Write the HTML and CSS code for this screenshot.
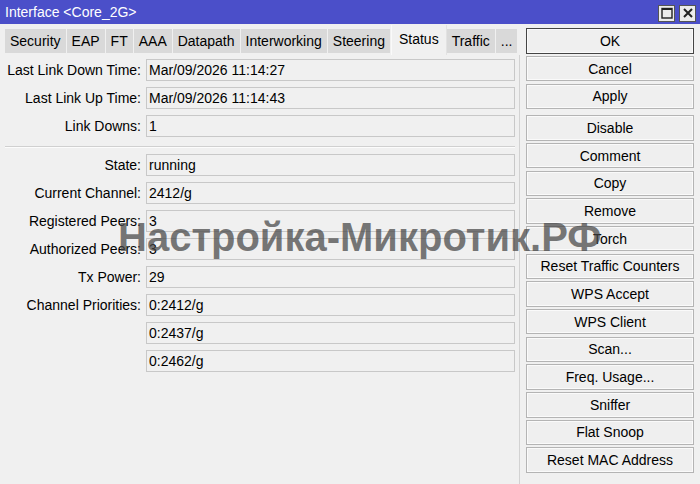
FILE: index.html
```html
<!DOCTYPE html>
<html lang="en">
<head>
  <meta charset="UTF-8" />
  <meta name="viewport" content="width=device-width, initial-scale=1.0" />
  <title>Interface &lt;Core_2G&gt;</title>
  <link rel="stylesheet" href="styles.css">
</head>
<body>
  <div class="window">
    <!-- title bar -->
    <div class="titlebar">
      <span class="title">Interface &lt;Core_2G&gt;</span>
      <div class="title-btns">
        <span class="tbtn">
          <svg width="12" height="12" viewBox="0 0 12 12"><rect x="1" y="1.5" width="10" height="9.5" fill="none" stroke="#222" stroke-width="1.4"/><line x1="1" y1="2" x2="11" y2="2" stroke="#222" stroke-width="2"/></svg>
        </span>
        <span class="tbtn">
          <svg width="12" height="12" viewBox="0 0 12 12"><path d="M2 2 L10 10 M10 2 L2 10" stroke="#222" stroke-width="2"/></svg>
        </span>
      </div>
    </div>

    <div class="main">
      <div class="left">
        <div class="tabs">
          <div class="tab">Security</div>
          <div class="tab">EAP</div>
          <div class="tab">FT</div>
          <div class="tab">AAA</div>
          <div class="tab">Datapath</div>
          <div class="tab">Interworking</div>
          <div class="tab">Steering</div>
          <div class="tab active">Status</div>
          <div class="tab">Traffic</div>
          <div class="tab">...</div>
        </div>

        <div class="panel">
          <div class="form">
            <label>Last Link Down Time:</label><div class="field">Mar/09/2026 11:14:27</div>
            <label>Last Link Up Time:</label><div class="field">Mar/09/2026 11:14:43</div>
            <label>Link Downs:</label><div class="field">1</div>
          </div>
          <div class="sep"></div>
          <div class="form">
            <label>State:</label><div class="field">running</div>
            <label>Current Channel:</label><div class="field">2412/g</div>
            <label>Registered Peers:</label><div class="field">3</div>
            <label>Authorized Peers:</label><div class="field">3</div>
            <label>Tx Power:</label><div class="field">29</div>
            <label>Channel Priorities:</label><div class="field">0:2412/g</div>
            <label></label><div class="field">0:2437/g</div>
            <label></label><div class="field">0:2462/g</div>
          </div>
        </div>
      </div>

      <div class="buttons">
        <button class="btn default">OK</button>
        <button class="btn">Cancel</button>
        <button class="btn">Apply</button>
        <button class="btn spaced">Disable</button>
        <button class="btn">Comment</button>
        <button class="btn">Copy</button>
        <button class="btn">Remove</button>
        <button class="btn">Torch</button>
        <button class="btn">Reset Traffic Counters</button>
        <button class="btn">WPS Accept</button>
        <button class="btn">WPS Client</button>
        <button class="btn">Scan...</button>
        <button class="btn">Freq. Usage...</button>
        <button class="btn">Sniffer</button>
        <button class="btn">Flat Snoop</button>
        <button class="btn">Reset MAC Address</button>
      </div>
    </div>

    <!-- watermark -->
    <div class="watermark">Настройка-Микротик.РФ</div>
  </div>
</body>
</html>
```

FILE: styles.css
```css
html, body {
  margin: 0;
  padding: 0;
  overflow: hidden;
  background: #f0f0f0;
  font-family: "Liberation Sans", Arial, sans-serif;
  font-size: 14px;
  color: #000;
}

.window {
  position: relative;
  width: 700px;
  height: 484px;
  background: #f0f0f0;
}

.titlebar {
  height: 24px;
  background: #4b4fc9;
  color: #fff;
  display: flex;
  align-items: center;
  justify-content: space-between;
  padding-left: 5px;
  box-sizing: border-box;
}
.title {
  font-size: 14px;
}
.title-btns {
  display: flex;
  gap: 4px;
  margin-right: 4px;
  margin-top: 2px;
}
.tbtn {
  width: 15px;
  height: 15px;
  background: #ececec;
  border: 1px solid #555;
  display: flex;
  align-items: center;
  justify-content: center;
}

.main {
  display: flex;
  height: 460px;
}

.left {
  width: 520px;
  display: flex;
  flex-direction: column;
}

.tabs {
  display: flex;
  align-items: flex-start;
  height: 30px;
  margin-top: 1px;
  padding-left: 5px;
}
.tab {
  margin-top: 4px;
  height: 24px;
  line-height: 24px;
  padding: 0 5px;
  background: #d9d9d9;
  border-right: 1px solid #f0f0f0;
  white-space: nowrap;
}
.tab.active {
  margin-top: 0;
  height: 30px;
  padding: 0 7px;
  background: #f0f0f0;
  border-left: 1px solid #fafafa;
  border-right: 1px solid #e2e2e2;
  line-height: 29px;
}

.panel {
  flex: 1;
  padding-top: 4px;
  border-right: 1px solid #d2d2d2;
}

.form {
  display: grid;
  grid-template-columns: 141px 369px;
  grid-auto-rows: 22px;
  column-gap: 5px;
  row-gap: 6px;
}
.form label {
  text-align: right;
  line-height: 22px;
  white-space: nowrap;
}
.field {
  box-sizing: border-box;
  border: 1px solid #c8c8c8;
  line-height: 20px;
  padding-left: 2px;
  white-space: nowrap;
}

.sep {
  margin: 9px 5px 6px 5px;
  height: 0;
  border-top: 1px solid #d0d0d0;
  border-bottom: 1px solid #fcfcfc;
  width: 510px;
}

.buttons {
  display: flex;
  flex-direction: column;
  padding: 4.2px 0 0 6px;
  gap: 2.2px;
}
.btn {
  width: 168px;
  height: 25.5px;
  margin: 0;
  padding: 0;
  background: #efefef;
  border: 1px solid #b4b4b4;
  box-shadow: inset 0 0 0 1px #fafafa;
  font-family: "Liberation Sans", Arial, sans-serif;
  font-size: 14px;
  color: #000;
  text-align: center;
}
.btn.default {
  border: 1px solid #444;
}
.btn.spaced {
  margin-top: 3.9px;
}

.watermark {
  position: absolute;
  left: 118px;
  top: 215px;
  font-family: "Liberation Sans", Arial, sans-serif;
  font-weight: 700;
  font-size: 40px;
  color: rgba(70, 70, 70, 0.72);
  white-space: nowrap;
  pointer-events: none;
}
```
